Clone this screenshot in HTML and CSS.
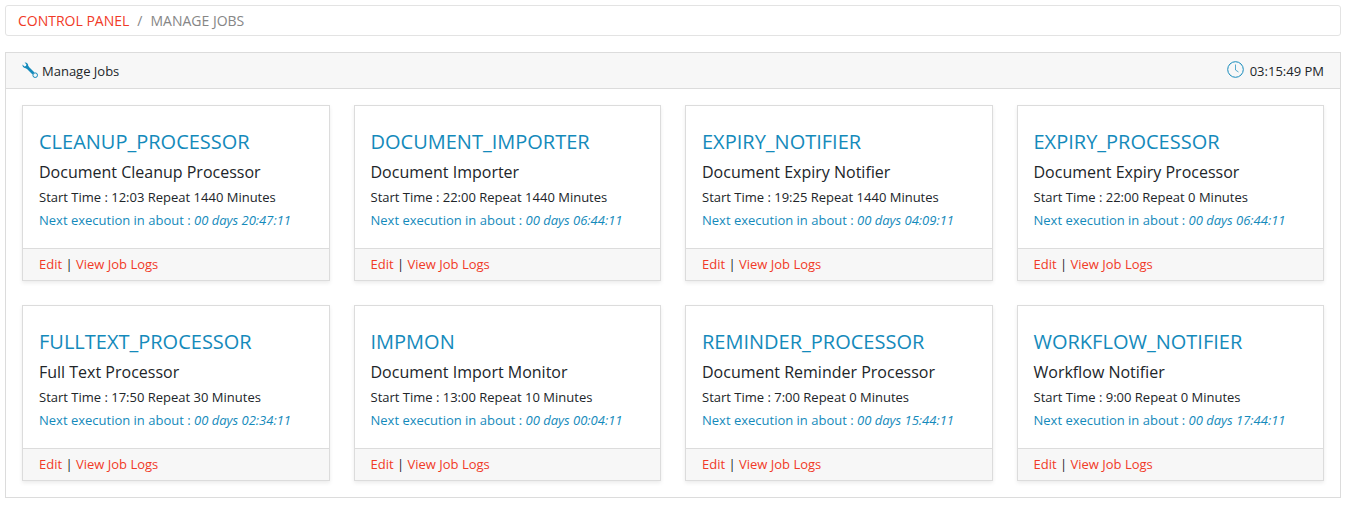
FILE: index.html
```
<!DOCTYPE html>
<html lang="en">
<head>
  <meta charset="UTF-8" />
  <meta name="viewport" content="width=device-width, initial-scale=1" />
  <title>Manage Jobs</title>
  <link rel="stylesheet" href="styles.css">
</head>
<body>
  <nav aria-label="breadcrumb">
    <ol class="breadcrumb">
      <li><a href="#">Control Panel</a></li>
      <li>Manage Jobs</li>
    </ol>
  </nav>

  <main class="panel">
    <div class="panel-header">
      <div class="panel-title">
        <!-- Wrench -->
        <svg class="icon" width="16" height="16" viewBox="0 0 16 16" fill="none" stroke="currentColor">
          <path d="M5 5 L11.5 11.5" stroke-width="2.8" />
          <path d="M2.6 .5 C4.8 .2 6.4 1.8 6.2 3.8 L6.8 5.2 L5.2 6.8 L3.8 6.2 C1.8 6.4 .2 4.8 .5 2.6 L2.4 4.4 L4 4 L4.4 2.4 Z" fill="currentColor" stroke="none" />
          <circle cx="13.2" cy="13.2" r="2.3" fill="#f7f7f7" stroke-width="1" />
        </svg>
        <span>Manage Jobs</span>
      </div>
      <div class="clock">
        <!-- Clock -->
        <svg class="icon" width="17" height="17" viewBox="0 0 17 17" fill="none" stroke="currentColor">
          <circle cx="8.5" cy="8.5" r="7.8" />
          <path d="M8.5 3.5 V9 L11.5 11" stroke-opacity=".7" />
        </svg>
        <span id="time">03:15:49 PM</span>
      </div>
    </div>

    <div class="jobs">
      <div class="card">
        <div class="card-body">
          <h2>CLEANUP_PROCESSOR</h2>
          <h3>Document Cleanup Processor</h3>
          <p>Start Time : 12:03 Repeat 1440 Minutes</p>
          <p class="next">Next execution in about : <em>00 days 20:47:11</em></p>
        </div>
        <div class="card-footer"><a href="#">Edit</a> | <a href="#">View Job Logs</a></div>
      </div>

      <div class="card">
        <div class="card-body">
          <h2>DOCUMENT_IMPORTER</h2>
          <h3>Document Importer</h3>
          <p>Start Time : 22:00 Repeat 1440 Minutes</p>
          <p class="next">Next execution in about : <em>00 days 06:44:11</em></p>
        </div>
        <div class="card-footer"><a href="#">Edit</a> | <a href="#">View Job Logs</a></div>
      </div>

      <div class="card">
        <div class="card-body">
          <h2>EXPIRY_NOTIFIER</h2>
          <h3>Document Expiry Notifier</h3>
          <p>Start Time : 19:25 Repeat 1440 Minutes</p>
          <p class="next">Next execution in about : <em>00 days 04:09:11</em></p>
        </div>
        <div class="card-footer"><a href="#">Edit</a> | <a href="#">View Job Logs</a></div>
      </div>

      <div class="card">
        <div class="card-body">
          <h2>EXPIRY_PROCESSOR</h2>
          <h3>Document Expiry Processor</h3>
          <p>Start Time : 22:00 Repeat 0 Minutes</p>
          <p class="next">Next execution in about : <em>00 days 06:44:11</em></p>
        </div>
        <div class="card-footer"><a href="#">Edit</a> | <a href="#">View Job Logs</a></div>
      </div>

      <div class="card">
        <div class="card-body">
          <h2>FULLTEXT_PROCESSOR</h2>
          <h3>Full Text Processor</h3>
          <p>Start Time : 17:50 Repeat 30 Minutes</p>
          <p class="next">Next execution in about : <em>00 days 02:34:11</em></p>
        </div>
        <div class="card-footer"><a href="#">Edit</a> | <a href="#">View Job Logs</a></div>
      </div>

      <div class="card">
        <div class="card-body">
          <h2>IMPMON</h2>
          <h3>Document Import Monitor</h3>
          <p>Start Time : 13:00 Repeat 10 Minutes</p>
          <p class="next">Next execution in about : <em>00 days 00:04:11</em></p>
        </div>
        <div class="card-footer"><a href="#">Edit</a> | <a href="#">View Job Logs</a></div>
      </div>

      <div class="card">
        <div class="card-body">
          <h2>REMINDER_PROCESSOR</h2>
          <h3>Document Reminder Processor</h3>
          <p>Start Time : 7:00 Repeat 0 Minutes</p>
          <p class="next">Next execution in about : <em>00 days 15:44:11</em></p>
        </div>
        <div class="card-footer"><a href="#">Edit</a> | <a href="#">View Job Logs</a></div>
      </div>

      <div class="card">
        <div class="card-body">
          <h2>WORKFLOW_NOTIFIER</h2>
          <h3>Workflow Notifier</h3>
          <p>Start Time : 9:00 Repeat 0 Minutes</p>
          <p class="next">Next execution in about : <em>00 days 17:44:11</em></p>
        </div>
        <div class="card-footer"><a href="#">Edit</a> | <a href="#">View Job Logs</a></div>
      </div>
    </div>
  </main>
</body>
</html>
```
FILE: styles.css
```
* {
  box-sizing: border-box;
}

body {
  margin: 5px;
  font-family: "Open Sans", sans-serif;
  font-size: 13px;
  line-height: 23px;
  color: #212529;
  background: #fff;
}

h2, h3, p {
  margin: 0;
  font-weight: 400;
}

a {
  color: #f13a27;
  text-decoration: none;
}

a:hover {
  text-decoration: underline;
}

/* Breadcrumb */
.breadcrumb {
  display: flex;
  margin: 0 0 16px;
  padding: 3px 12px;
  list-style: none;
  font-size: 14px;
  text-transform: uppercase;
  color: #868686;
  border: 1px solid #e3e3e3;
  border-radius: 3px;
}

.breadcrumb li + li::before {
  content: "/";
  padding: 0 8px;
}

/* Panel */
.panel {
  border: 1px solid #dcdcdc;
}

.panel-header {
  display: flex;
  justify-content: space-between;
  padding: 7px 16px 5px;
  background: #f7f7f7;
  border-bottom: 1px solid #dcdcdc;
}

.panel-title,
.clock {
  display: flex;
  align-items: center;
  gap: 4px;
}

.clock {
  gap: 6px;
}

.icon {
  color: #148abb;
  margin-bottom: 4px;
}

/* Job cards */
.jobs {
  display: grid;
  grid-template-columns: repeat(4, 1fr);
  gap: 24px;
  padding: 16px;
}

.card {
  border: 1px solid #dcdcdc;
  box-shadow: 0 2px 4px rgba(0, 0, 0, 0.08);
}

.card-body {
  padding: 24px 16px 16px;
}

.card h2 {
  margin-bottom: 6px;
  font-size: 20px;
  line-height: 24px;
  color: #148abb;
}

.card h3 {
  margin-bottom: 2px;
  font-size: 16px;
  line-height: 24px;
}

.next {
  color: #148abb;
}

.card-footer {
  padding: 4px 16px;
  background: #f7f7f7;
  border-top: 1px solid #dcdcdc;
}

@media (max-width: 1100px) {
  .jobs {
    grid-template-columns: repeat(2, 1fr);
  }
}

@media (max-width: 600px) {
  .jobs {
    grid-template-columns: 1fr;
  }
}
```
